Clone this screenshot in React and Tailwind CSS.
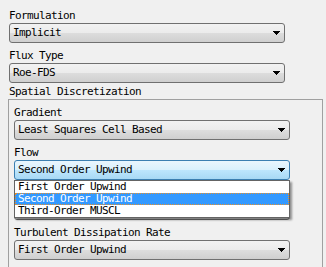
import React from "react";

const Arrow = () => (
    <svg width="7" height="4" viewBox="0 0 7 4" shapeRendering="crispEdges">
        <path d="M0 0h7v1h-1v1h-1v1h-1v1h-1v-1h-1v-1h-1v-1h-1z" fill="#000" />
    </svg>
);

const Combo = ({ value, active }) => (
    <div
        className={
            active
                ? "flex h-[20px] w-[276px] items-center justify-between rounded-[3px] border border-[#3c7fb1] bg-[linear-gradient(to_bottom,#eaf6fd_0%,#d9f0fc_50%,#bee6fd_50%,#a7d9f5_100%)] pl-[3px] pr-[4px]"
                : "flex h-[20px] w-[276px] items-center justify-between rounded-[3px] border border-[#707070] bg-[linear-gradient(to_bottom,#f2f2f2_0%,#ebebeb_50%,#dddddd_50%,#cfcfcf_100%)] pl-[3px] pr-[4px]"
        }
    >
        <span className="whitespace-nowrap">{value}</span>
        <Arrow />
    </div>
);

const Label = ({ children, className = "" }) => (
    <div className={"h-[14px] whitespace-nowrap leading-[14px] " + className}>{children}</div>
);

const flowOptions = ["First Order Upwind", "Second Order Upwind", "Third-Order MUSCL"];

const App = () => {
    return (
        <div className="h-[267px] w-[326px] overflow-hidden bg-[#f0f0f0] pl-[8px] pt-[9px] font-['DejaVu_Sans_Mono',monospace] text-[11px] tracking-[-0.62px] text-black">
            <div className="ml-px">
                <Label>Formulation</Label>
                <Combo value="Implicit" />
                <Label className="mt-[6px]">Flux Type</Label>
                <Combo value="Roe-FDS" />
                <Label className="mt-[2px]">Spatial Discretization</Label>
            </div>

            <div className="h-[300px] w-[315px] border border-[#a0a0a0] pl-[5px] pt-[6px]">
                <Label>Gradient</Label>
                <Combo value="Least Squares Cell Based" />

                <Label className="mt-[6px]">Flow</Label>
                <div className="relative">
                    <Combo value="Second Order Upwind" active />
                    <div className="absolute left-0 top-[20px] z-10 w-[276px] border border-[#646464] bg-white shadow-[2px_2px_2px_rgba(0,0,0,0.4)]">
                        {flowOptions.map((opt, ind) => (
                            <div
                                key={ind}
                                className={
                                    ind === 1
                                        ? "h-[12px] whitespace-nowrap border border-dotted border-[#e8902a] bg-[#3399ff] pl-[2px] leading-[10px] text-white"
                                        : "h-[12px] whitespace-nowrap border border-transparent pl-[2px] leading-[10px]"
                                }
                            >
                                {opt}
                            </div>
                        ))}
                    </div>
                </div>

                {/* row hidden under the open list */}
                <Label className="mt-[6px]"></Label>
                <Combo value="" />

                <Label className="mt-[6px]">Turbulent Dissipation Rate</Label>
                <Combo value="First Order Upwind" />
            </div>
        </div>
    );
};

export default App;
